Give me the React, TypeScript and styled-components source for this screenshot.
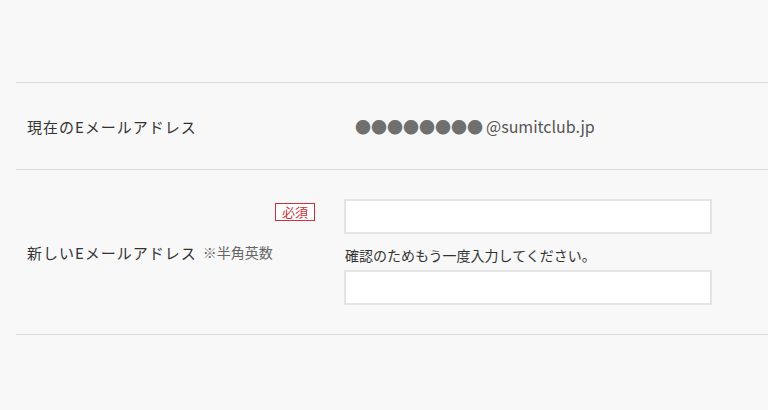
import React from "react";
import styled, { createGlobalStyle } from "styled-components";

const Global = createGlobalStyle`
  html, body { margin: 0; padding: 0; background: #f8f8f8; }
  body {
    font-family: "Noto Sans CJK JP", "Noto Sans", sans-serif;
    color: #333;
  }
`;

const Page = styled.div`
  width: 768px;
  height: 410px;
  padding: 82px 0 0 16px;
  box-sizing: border-box;
  background: #f8f8f8;
`;

const Table = styled.div`
  display: flex;
  flex-direction: column;
  border-bottom: 1px solid #dcdcdc;
`;

const Row = styled.div<{ $h: number }>`
  display: grid;
  grid-template-columns: 328px 368px 1fr;
  height: ${(p) => p.$h}px;
  box-sizing: border-box;
  border-top: 1px solid #dcdcdc;
`;

const Label = styled.div`
  position: relative;
  display: flex;
  align-items: center;
  padding-left: 11px;
  font-size: 15px;
  color: #333;
  letter-spacing: 1px;
`;

const Note = styled.span`
  font-size: 14px;
  color: #666;
  margin-left: 6px;
  letter-spacing: 0;
`;

const Badge = styled.span`
  position: absolute;
  top: 33px;
  right: 29px;
  border: 1px solid #c8343a;
  color: #c8343a;
  font-size: 13px;
  line-height: 16px;
  padding: 0 6px;
  letter-spacing: 0;
  background: #fff;
`;

const Value = styled.div`
  display: flex;
  align-items: center;
  padding-left: 11px;
  font-size: 16px;
  color: #555;
`;

const Dots = styled.span`
  color: #6f6f6f;
  letter-spacing: 0;
  margin-right: 3px;
`;

const Fields = styled.div`
  display: flex;
  flex-direction: column;
  padding-top: 29px;
`;

const Input = styled.input`
  box-sizing: border-box;
  width: 368px;
  height: 35px;
  border: 2px solid #e4e4e4;
  background: #fff;
  outline: none;
  padding: 0 8px;
  font-size: 14px;
`;

const Help = styled.div`
  font-size: 14px;
  color: #333;
  margin: 11px 0 5px 1px;
  line-height: 20px;
`;

export default function App() {
  return (
    <>
      <Global />
      <Page>
        <Table>
          <Row $h={87}>
            <Label>現在のEメールアドレス</Label>
            <Value>
              <Dots>●●●●●●●●</Dots>@sumitclub.jp
            </Value>
          </Row>
          <Row $h={165}>
            <Label>
              新しいEメールアドレス<Note>※半角英数</Note>
              <Badge>必須</Badge>
            </Label>
            <Fields>
              <Input type="text" />
              <Help>確認のためもう一度入力してください。</Help>
              <Input type="text" />
            </Fields>
          </Row>
        </Table>
      </Page>
    </>
  );
}
